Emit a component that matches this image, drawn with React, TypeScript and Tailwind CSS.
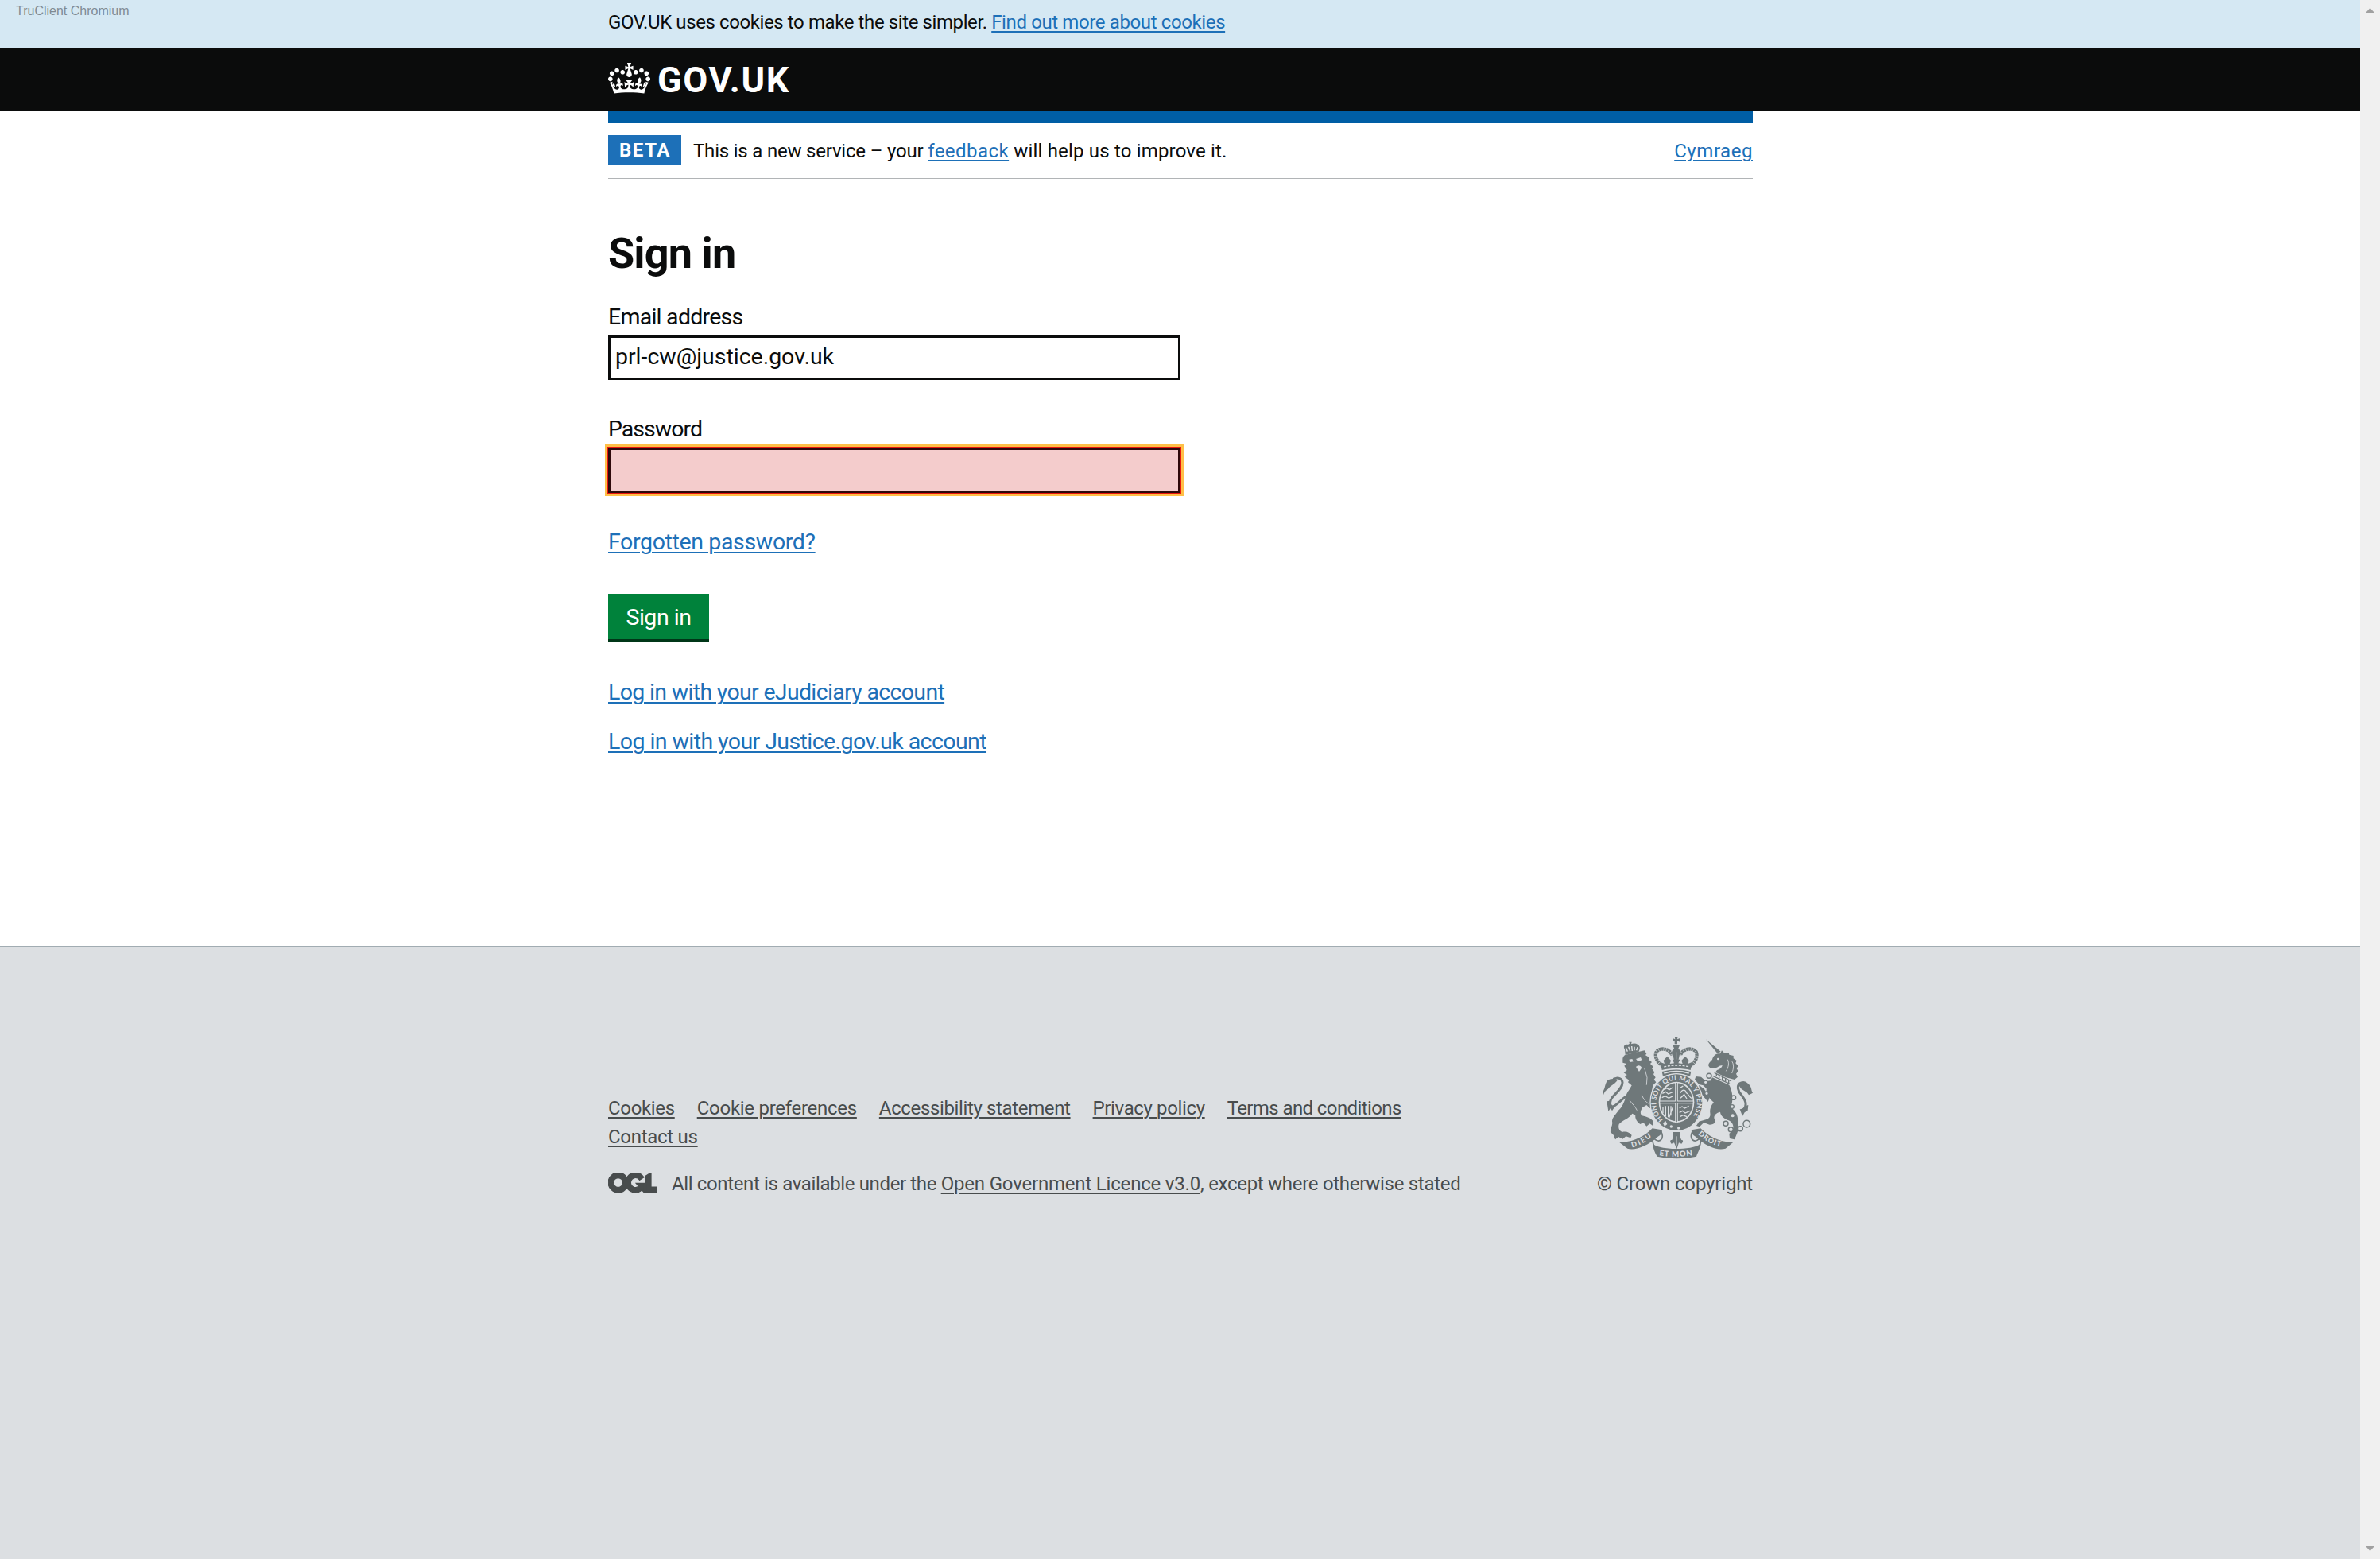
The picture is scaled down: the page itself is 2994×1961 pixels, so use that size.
import React from "react";

const LINK = "text-[#1d70b8] underline decoration-2 underline-offset-[3px]";
const FOOTER_LINK = "underline decoration-2 underline-offset-[3px]";

function Crown() {
  return (
    <svg viewBox="0 0 132 97" className="h-[39px] w-[53px]" fill="#fff" aria-hidden="true">
      <path d="M25 30.2c3.5 1.5 7.7-.2 9.1-3.7 1.5-3.6-.2-7.8-3.9-9.2-3.6-1.4-7.6.3-9.1 3.9-1.4 3.5.3 7.5 3.9 9zM9 39.5c3.6 1.5 7.8-.2 9.2-3.7 1.5-3.6-.2-7.8-3.9-9.1-3.6-1.5-7.6.2-9.1 3.8-1.4 3.5.3 7.5 3.8 9zM4.4 57.2c3.5 1.5 7.7-.2 9.1-3.8 1.5-3.6-.2-7.7-3.9-9.1-3.5-1.5-7.6.3-9.1 3.8-1.4 3.5.3 7.6 3.9 9.1zm38.3-21.4c3.5 1.5 7.7-.2 9.1-3.8 1.5-3.6-.2-7.7-3.9-9.1-3.6-1.5-7.6.3-9.1 3.8-1.3 3.6.4 7.7 3.9 9.1zm64.4-5.6c-3.6 1.5-7.8-.2-9.1-3.7-1.5-3.6.2-7.8 3.8-9.2 3.6-1.4 7.7.3 9.2 3.9 1.3 3.5-.4 7.5-3.9 9zm15.9 9.3c-3.6 1.5-7.7-.2-9.1-3.7-1.5-3.6.2-7.8 3.7-9.1 3.6-1.5 7.7.2 9.2 3.8 1.5 3.5-.3 7.5-3.8 9zm4.7 17.7c-3.6 1.5-7.8-.2-9.2-3.8-1.5-3.6.2-7.7 3.9-9.1 3.6-1.5 7.7.3 9.2 3.8 1.3 3.5-.4 7.6-3.9 9.1zM89.3 35.8c-3.6 1.5-7.8-.2-9.2-3.8-1.4-3.6.2-7.7 3.9-9.1 3.6-1.5 7.7.3 9.2 3.8 1.4 3.6-.3 7.7-3.9 9.1zM69.7 17.7l8.9 4.7V9.3l-8.9 2.8c-.2-.3-.5-.6-.9-.9L72.4 0H59.6l3.5 11.2c-.3.3-.6.5-.9.9l-8.8-2.8v13.1l8.8-4.7c.3.3.6.7.9.9l-5 15.4v.1c-.2.8-.4 1.6-.4 2.4 0 4.1 3.1 7.5 7 8.1h.2c.3 0 .7.1 1 .1.4 0 .7 0 1-.1h.2c4-.6 7.1-4.1 7.1-8.1 0-.8-.1-1.7-.4-2.4V34l-5.1-15.4c.4-.2.7-.6 1-.9zM66 92.8c16.9 0 32.8 1.1 47.1 3.2 4-16.9 8.9-26.7 14-33.5l-9.6-3.4c1 4.9 1.1 7.2 0 10.2-1.5-1.4-3-4.3-4.2-8.7L108.6 76c2.8-2 5-3.2 7.5-3.3-4.4 9.4-10 11.9-13.6 11.2-4.3-.8-6.3-4.6-5.6-7.9 1-4.7 5.7-5.9 8-.5 4.3-8.7-3-11.4-7.6-8.8 7.1-7.2 7.9-13.5 2.1-21.1-8 6.1-8.1 12.3-4.5 20.8-4.7-5.4-12.1-2.5-9.5 6.2 3.4-5.2 7.9-2 7.2 3.1-.6 4.3-6.4 7.8-13.5 7.2-10.3-.9-10.9-8-11.2-13.8 2.5-.5 7.1 1.8 11 7.3L80.2 60c-4.1 4.4-8 5.3-12.3 5.4 1.4-4.4 8-11.6 8-11.6H55.5s6.4 7.2 7.9 11.6c-4.2-.1-8-1-12.3-5.4l1.4 16.4c3.9-5.5 8.5-7.7 10.9-7.3-.3 5.8-.9 12.8-11.1 13.8-7.2.6-12.9-2.9-13.5-7.2-.7-5 3.8-8.3 7.1-3.1 2.7-8.7-4.6-11.6-9.4-6.2 3.7-8.5 3.6-14.7-4.6-20.8-5.8 7.6-5 13.9 2.2 21.1-4.7-2.6-11.9.1-7.7 8.8 2.3-5.5 7.1-4.2 8.1.5.7 3.3-1.3 7.1-5.7 7.9-3.5.7-9-1.8-13.5-11.2 2.5.1 4.7 1.3 7.5 3.3l-4.7-15.4c-1.2 4.4-2.7 7.2-4.3 8.7-1.1-3-.9-5.3 0-10.2l-9.5 3.4c5 6.9 9.9 16.7 14 33.5 14.8-2.1 30.8-3.2 47.7-3.2z" />
    </svg>
  );
}

function OglLogo() {
  return (
    <svg viewBox="0 0 483.2 195.7" className="h-[25px] w-[62px]" fill="#484c4d" aria-hidden="true">
      <path
        stroke="#484c4d"
        strokeWidth="10"
        d="M421.5 142.8V.1l-50.7 32.3v161.1h112.4v-50.7zm-122.3-9.6A47.12 47.12 0 0 1 221 97.8c0-26 21.1-47.1 47.1-47.1 16.7 0 31.4 8.7 39.7 21.8l42.7-27.2A97.63 97.63 0 0 0 268.1 0c-36.5 0-68.3 20.1-85.1 49.7A98 98 0 0 0 97.8 0C43.9 0 0 43.9 0 97.8s43.9 97.8 97.8 97.8c36.5 0 68.3-20.1 85.1-49.7a97.76 97.76 0 0 0 149.6 25.4l19.4 22.2h3v-87.8h-80l24.3 27.5zM97.8 145c-26 0-47.1-21.1-47.1-47.1s21.1-47.1 47.1-47.1 47.1 21.1 47.1 47.1S123.8 145 97.8 145"
      />
    </svg>
  );
}

function RoyalArms() {
  const ink = "#6f787a";
  const paper = "#dcdfe2";
  return (
    <svg viewBox="51 42 564 459" className="h-[153px] w-[188px] overflow-visible" fill={ink} aria-hidden="true">
      <defs>
        <path id="garter" d="M276 356A77 86 0 1 1 384 350" />
        <path id="dieu" d="M160 460C188 454 214 438 242 412" />
        <path id="mon" d="M262 490C300 496 350 496 394 489" />
        <path id="droit" d="M408 410C436 437 464 452 504 459" />
      </defs>

      {/* Lion: tail, coronet, body and legs */}
      <path d="M51 246C58 236 56 222 66 208C78 198 96 200 104 206C94 222 76 226 70 238C64 244 58 244 51 262Z" />
      <path
        d="M88 202C108 194 122 200 123 214C124 236 98 254 84 272C72 288 76 304 84 306C98 306 110 286 136 268"
        fill="none"
        stroke={ink}
        strokeWidth="9"
      />
      <path d="M64 286L76 284L82 300L92 310L84 322L78 312L70 324Z" />
      <path d="M132 90C124 78 132 68 144 72L150 68L148 62H158L156 70C170 64 184 70 188 80C190 88 186 94 184 100L134 110Z" />
      <path
        d="M136 84L142 98M146 80L152 96M158 78L160 96M168 80L168 94M180 82L176 94"
        stroke={paper}
        strokeWidth="4.5"
        fill="none"
      />
      <path d="M124 128C124 116 132 110 142 109L206 94L214 106L210 112L224 120L222 128L234 138L228 144L240 156L234 162L244 176L240 184L248 196L242 204L250 214L238 226L234 246L242 258L240 276L230 262C232 282 240 296 238 306L226 312L214 300L198 310C192 322 188 330 196 340C214 344 230 348 240 362L238 378L226 370L214 380L202 366L190 372C178 364 170 350 172 338L160 332C150 350 124 356 110 372C106 386 110 396 122 402C136 398 150 402 158 414L154 424L136 418L124 428L108 420L96 430L90 414L78 402C76 388 88 376 84 362C84 346 98 336 108 320C124 306 126 294 134 276C136 256 148 246 158 226L144 214L148 206L132 194L140 186L128 178L140 168L130 152L138 144L124 140Z" />
      <path
        d="M174 126L192 120L196 130L182 136Z M148 128L160 126L164 136L152 138Z M174 156C182 148 192 150 196 160L186 174Z"
        fill={paper}
      />
      <path
        d="M206 160L216 196L214 224M196 262C206 286 216 290 224 296M150 282C160 296 172 306 178 320"
        stroke={paper}
        strokeWidth="2.5"
        fill="none"
      />

      {/* Unicorn: horn, head, collar, body and tail */}
      <path d="M438 52L494 98L482 106Z" />
      <path d="M448 152C446 142 456 136 462 128C466 112 478 104 492 106L498 94L508 104L524 102L526 110L542 114L542 124L554 132L550 142L560 152L554 162L560 172L552 182L558 194L546 204L514 196L474 176L480 168C488 166 498 160 500 150C488 150 482 160 468 162C458 162 452 160 448 152Z" />
      <path d="M470 178L534 210M464 190L528 220" stroke={ink} strokeWidth="4" fill="none" />
      <path
        d="M478 182V192M488 187V198M500 193V204M512 199V210M524 205V216"
        stroke={ink}
        strokeWidth="4"
        fill="none"
      />
      <circle cx="484" cy="126" r="4" fill={paper} />
      <path
        d="M534 132C544 144 544 160 536 180M520 128C526 142 524 156 514 172"
        stroke={paper}
        strokeWidth="2.5"
        fill="none"
      />
      <path d="M462 196L526 224C540 250 542 284 532 308C552 324 562 344 558 364C566 384 558 404 546 430L528 426L526 408L540 396C544 380 540 366 524 358C506 350 494 342 492 326C476 330 466 340 470 352C480 362 470 374 452 374L430 366L414 382L402 378L412 362L440 354C452 350 456 342 454 330C452 312 460 298 468 290C452 278 438 258 440 238L428 226L412 222L396 204L400 192L420 194L438 210L456 208Z" />
      <path d="M412 224L432 240L452 272L446 288L424 262L412 254Z" />
      <path
        d="M600 244C600 226 590 210 572 216C550 224 560 248 572 262C588 282 596 300 578 322"
        fill="none"
        stroke={ink}
        strokeWidth="9"
      />
      <path d="M560 222C568 206 590 214 600 222C612 232 608 246 615 254L600 262C594 248 574 244 568 234Z M566 316C580 314 584 304 598 300L596 320L584 328L576 342Z" />
      <g fill="none" stroke={ink} strokeWidth="4.5">
        <circle cx="450" cy="190" r="9" />
        <circle cx="513" cy="370" r="9" />
        <circle cx="532" cy="392" r="9" />
        <circle cx="592" cy="371" r="13" />
        <circle cx="568" cy="389" r="9" />
      </g>
      <g fill={paper} stroke={ink} strokeWidth="4">
        <circle cx="543" cy="272" r="8" />
        <circle cx="537" cy="306" r="7" />
        <circle cx="539" cy="340" r="8" />
        <circle cx="437" cy="214" r="7" />
        <circle cx="441" cy="256" r="7" />
      </g>

      {/* Crown above the garter */}
      <path d="M320 42H332L330 52L340 48V62L330 58V70H320V58L312 62V48L322 52Z M313 74H339L334 86L342 96L334 132H318L310 96L318 86Z" />
      <path d="M326 100V128" stroke={paper} strokeWidth="3" />
      <path
        d="M276 152C254 140 242 116 252 98C266 82 302 86 310 112M378 152C398 140 410 116 400 98C386 82 350 86 342 112"
        fill="none"
        stroke={ink}
        strokeWidth="13"
        strokeDasharray="8 1.5"
      />
      <path d="M266 138L282 144L278 132L292 116L306 132L302 144L318 142L312 128H340L334 142L350 144L346 132L360 116L374 132L370 144L386 138L380 168C346 160 306 160 272 168Z" />
      <path d="M280 156C310 148 344 148 374 156" fill="none" stroke={paper} strokeWidth="4" strokeDasharray="9 5" />
      <path d="M272 174C308 164 346 164 382 174L378 192C346 178 308 178 276 192Z" />
      <path d="M280 180C310 171 344 171 374 180" fill="none" stroke={paper} strokeWidth="5" />

      {/* Garter and quartered shield */}
      <ellipse cx="327" cy="290" rx="99" ry="108" stroke={paper} strokeWidth="4" />
      <ellipse cx="327" cy="289" rx="67" ry="77" fill={paper} />
      <ellipse cx="327" cy="289" rx="62" ry="72" />
      <path d="M327 214V366M263 289H391" stroke={paper} strokeWidth="11" fill="none" />
      <path d="M327 216V364M265 289H389" stroke={ink} strokeWidth="5" fill="none" />
      <g fill="none" stroke={paper} strokeWidth="4">
        <path d="M280 242L290 236L300 242L312 234M274 256L286 250L296 258L314 250M272 272L284 266L298 274L314 266" />
        <path d="M340 236L352 228M342 254C350 238 362 242 364 254C374 258 374 270 384 274M342 274L356 260L366 276" />
        <path d="M276 306V330M286 304V342M296 304V346M306 304V340M314 306L298 350" />
        <path d="M338 312L348 306L358 312L374 304M338 328L350 322L360 330L378 322M340 344L352 338L366 344" />
      </g>
      <text fontFamily="Lato, sans-serif" fontSize="26" fontWeight="700" fill={paper}>
        <textPath href="#garter" textLength="378" lengthAdjust="spacing">
          HONI SOIT QUI MAL Y PENSE
        </textPath>
      </text>
      <g fill={paper}>
        <circle cx="307" cy="381" r="5" />
        <circle cx="335" cy="387" r="5" />
        <path d="M276 368L286 360L292 372L282 380Z" />
      </g>

      {/* Fleur-de-lis and motto ribbon */}
      <path d="M315 402H340V420L346 432C354 430 352 440 346 446L336 442L328 466L318 442L308 446C302 438 302 430 310 432L315 420Z" />
      <path d="M327 418V452" stroke={paper} strokeWidth="3" />
      <path d="M108 438C160 444 204 420 236 388L272 394C274 404 268 414 256 420C214 458 168 472 142 464Z" />
      <path d="M544 438C494 444 450 420 418 388L384 394C382 404 388 414 400 420C440 458 482 472 512 464Z" />
      <path
        d="M268 398C284 428 262 446 244 428C232 416 236 434 241 452C245 466 254 468 262 462M388 398C372 428 394 446 412 428C424 416 420 434 415 452C411 466 402 468 394 462"
        fill="none"
        stroke={ink}
        strokeWidth="5"
      />
      <path d="M238 446C250 460 300 465 328 465C356 465 404 460 418 446C418 462 408 476 402 494C356 504 300 504 254 494C246 480 238 464 238 446Z" />
      <g fontFamily="Lato, sans-serif" fontWeight="900" fill={paper}>
        <text fontSize="27">
          <textPath href="#dieu" textLength="84" lengthAdjust="spacing">DIEU</textPath>
        </text>
        <text fontSize="29">
          <textPath href="#mon" textLength="126" lengthAdjust="spacing">ET MON</textPath>
        </text>
        <text fontSize="27">
          <textPath href="#droit" textLength="98" lengthAdjust="spacing">DROIT</textPath>
        </text>
      </g>
    </svg>
  );
}

function ScrollBar() {
  return (
    <div className="flex w-[25px] shrink-0 flex-col items-center justify-between bg-[#f0f0f0] pt-[10px] pb-[10px]">
      <svg viewBox="0 0 11 6" className="h-[6px] w-[11px]" fill="#a0a0a0">
        <path d="M5.5 0L11 6H0z" />
      </svg>
      <svg viewBox="0 0 11 6" className="h-[6px] w-[11px]" fill="#a0a0a0">
        <path d="M0 0H11L5.5 6z" />
      </svg>
    </div>
  );
}

function SignInForm() {
  return (
    <main className="flex w-[720px] flex-col items-start pt-[67px] text-[28.5px]">
      <h1 className="text-[54px] leading-[54px] font-bold tracking-[-0.9px]">Sign in</h1>
      <label className="mt-[38px] leading-[30px] tracking-[-0.75px]">Email address</label>
      <div className="mt-[8px] flex h-[56px] w-full items-center border-[3px] border-[#0b0c0c] px-[6px] pb-[2px] leading-[36px]">
        <span className="tracking-[-0.02px]">prl-cw@justice.gov.uk</span>
      </div>
      <label className="mt-[47px] leading-[30px] tracking-[-0.99px]">Password</label>
      <div className="mt-[8px] h-[57px] w-full border-[3px] border-[#2e080a] bg-[#f4cccc] shadow-[0_0_0_1px_#e8150f,0_0_0_4px_#ffbf47]" />
      <a className={`mt-[44px] leading-[36px] tracking-[-0.36px] ${LINK}`}>Forgotten password?</a>
      <button className="mt-[47px] flex h-[60px] w-[127px] items-center justify-center border-b-[3px] border-[#003618] bg-[#00823b] pt-[2px] leading-[36px] tracking-[-0.45px] text-white">
        Sign in
      </button>
      <a className={`mt-[46px] leading-[36px] tracking-[-0.67px] ${LINK}`}>Log in with your eJudiciary account</a>
      <a className={`mt-[26px] leading-[36px] tracking-[-0.57px] ${LINK}`}>Log in with your Justice.gov.uk account</a>
    </main>
  );
}

function Footer() {
  return (
    <footer className="flex-1 border-t border-[#a1acb2] bg-[#dcdfe2] text-[24px] leading-[36px] text-[#484c4d]">
      <div className="mx-auto flex w-[1440px] items-end justify-between pt-[113px]">
        <div>
          <div className="flex w-[1080px] flex-wrap gap-x-[28px]">
            <a className={`tracking-[-0.34px] ${FOOTER_LINK}`}>Cookies</a>
            <a className={`tracking-[-0.28px] ${FOOTER_LINK}`}>Cookie preferences</a>
            <a className={`tracking-[-0.36px] ${FOOTER_LINK}`}>Accessibility statement</a>
            <a className={`tracking-[-0.37px] ${FOOTER_LINK}`}>Privacy policy</a>
            <a className={`tracking-[-0.6px] ${FOOTER_LINK}`}>Terms and conditions</a>
            <a className={`tracking-[-0.28px] ${FOOTER_LINK}`}>Contact us</a>
          </div>
          <div className="mt-[23px] flex items-start">
            <div className="mr-[18px] pt-[4px]">
              <OglLogo />
            </div>
            <p className="whitespace-pre">
              <span className="tracking-[-0.36px]">All content is available under the </span>
              <a className={`tracking-[-0.19px] ${FOOTER_LINK}`}>Open Government Licence v3.0</a>
              <span className="tracking-[-0.29px]">, except where otherwise stated</span>
            </p>
          </div>
        </div>
        <div className="flex flex-col items-end">
          <RoyalArms />
          <span className="mt-[14px] tracking-[-0.16px]">© Crown copyright</span>
        </div>
      </div>
    </footer>
  );
}

export default function App() {
  return (
    <div className="flex h-[1961px] w-[2994px] bg-white font-['Roboto',sans-serif] text-[#0b0c0c]">
      <div className="relative flex flex-1 flex-col pl-px">
        <div className="-ml-px h-[60px] bg-[#d5e8f3] pl-px">
          <span className="absolute top-[5px] left-[20px] font-['Liberation_Sans',sans-serif] text-[16px] leading-[18px] text-[#808b93]">
            TruClient Chromium
          </span>
          <p className="mx-auto w-[1440px] pt-[10px] text-[24px] leading-[36px] whitespace-pre">
            <span className="tracking-[-0.4px]">GOV.UK uses cookies to make the site simpler. </span>
            <a className={`tracking-[-0.38px] ${LINK}`}>Find out more about cookies</a>
          </p>
        </div>
        <header className="-ml-px h-[80px] bg-[#0b0c0c] pl-px">
          <div className="mx-auto flex w-[1440px] items-start text-white">
            <div className="pt-[19px]">
              <Crown />
            </div>
            <span className="ml-[9px] pt-[18px] text-[45px] leading-[45px] font-bold tracking-[1.65px]">GOV.UK</span>
          </div>
        </header>
        <div className="mx-auto w-[1440px]">
          <div className="h-[15px] bg-[#005ea5]" />
          <div className="flex h-[70px] items-start border-b border-[#b1b4b6] pt-[15px] text-[24px] leading-[36px]">
            <strong className="flex h-[38px] w-[92px] items-center justify-center bg-[#1d70b8] pl-px font-bold tracking-[1.6px] text-white">
              BETA
            </strong>
            <p className="ml-[15px] pt-[2px] whitespace-pre">
              <span className="tracking-[-0.2px]">This is a new service – your </span>
              <a className={`tracking-[0.46px] ${LINK}`}>feedback</a>
              <span className="tracking-[0.18px]"> will help us to improve it.</span>
            </p>
            <a className={`ml-auto pt-[2px] tracking-[0.55px] ${LINK}`}>Cymraeg</a>
          </div>
          <SignInForm />
        </div>
        <div className="h-[239px] shrink-0" />
        <div className="-ml-px flex flex-1 flex-col [&>footer]:pl-px">
          <Footer />
        </div>
      </div>
      <ScrollBar />
    </div>
  );
}
